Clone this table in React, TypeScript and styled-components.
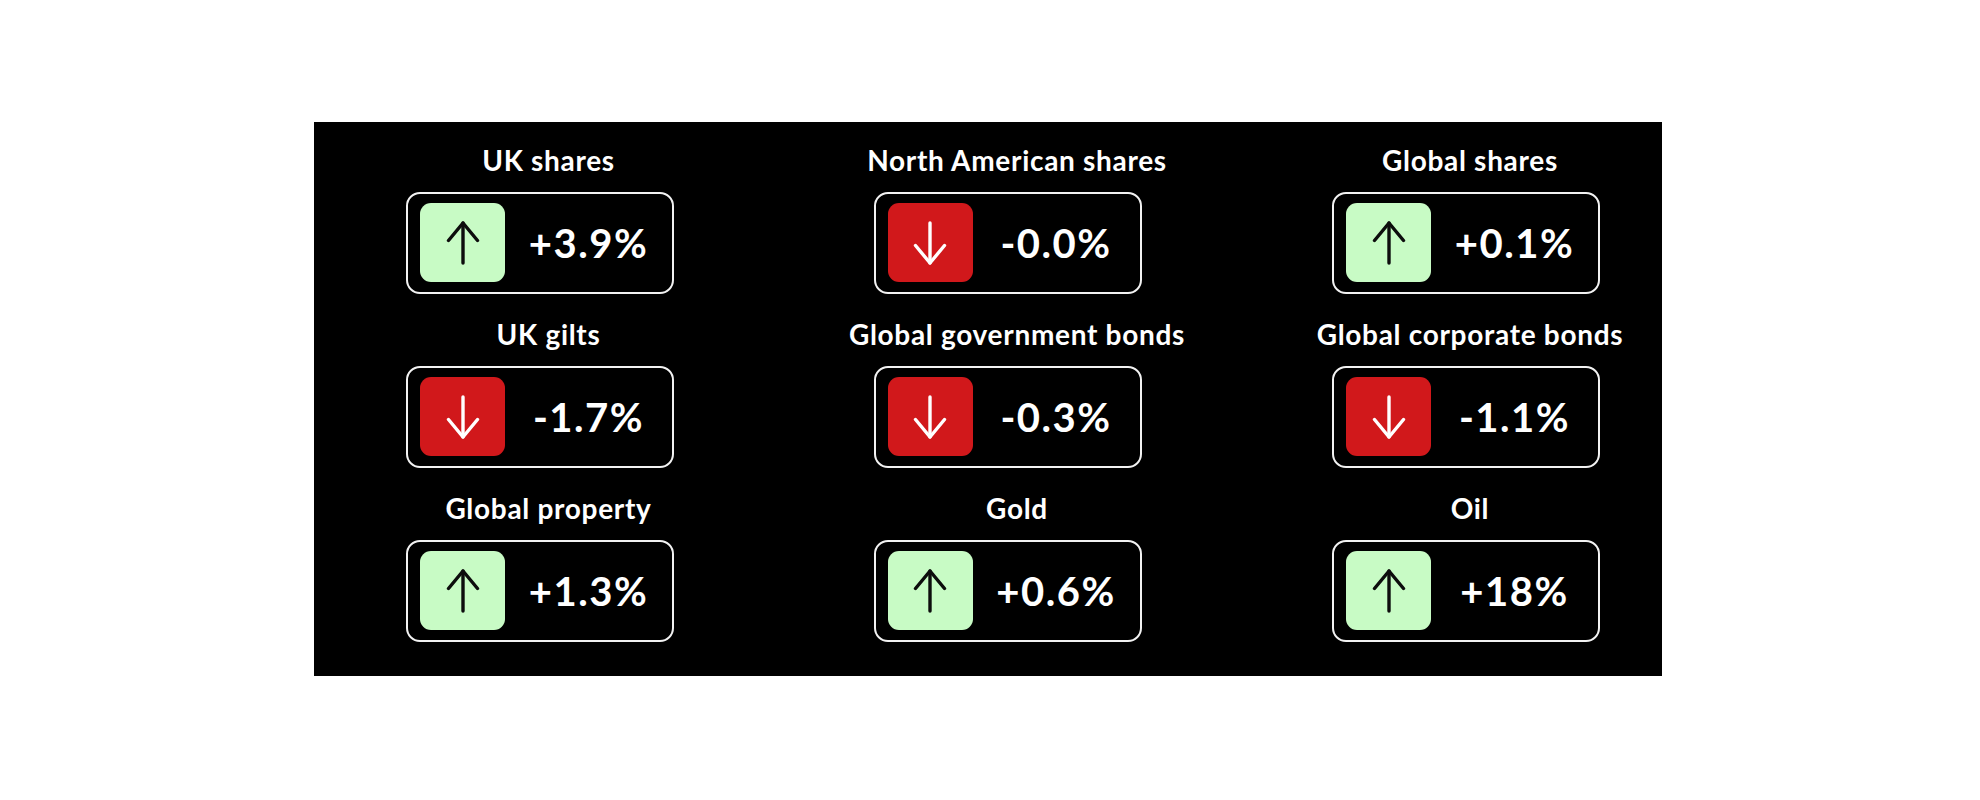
import React from "react";
import styled, { createGlobalStyle } from "styled-components";

const GlobalStyle = createGlobalStyle`
  html, body {
    margin: 0;
    padding: 0;
    background: #ffffff;
  }
  body {
    font-family: Lato, "Open Sans", "Liberation Sans", sans-serif;
  }
`;

const Page = styled.div`
  width: 1980px;
  height: 800px;
  padding: 122px 0 0 314px;
  box-sizing: border-box;
`;

const Panel = styled.section`
  width: 1348px;
  height: 554px;
  box-sizing: border-box;
  background: #000000;
  padding: 22px 0 0 26px;
  display: grid;
  grid-template-columns: 400px 535px 382px;
  grid-auto-rows: auto;
  row-gap: 24px;
  align-content: start;
`;

const Cell = styled.div`
  display: flex;
  flex-direction: column;
  align-items: center;
`;

const Title = styled.h3<{ $shift: number }>`
  margin: 0 0 16px 0;
  padding-left: ${(p) => p.$shift * 2}px;
  font-family: Lato, "Open Sans", "Liberation Sans", sans-serif;
  font-weight: 700;
  font-size: 28px;
  letter-spacing: 0.7px;
  line-height: 32px;
  color: #ffffff;
  white-space: nowrap;
  text-align: center;
`;

const Card = styled.div`
  width: 268px;
  height: 102px;
  box-sizing: border-box;
  border: 2px solid #f2f2f2;
  border-radius: 14px;
  padding: 9px 0 10px 12px;
  display: flex;
  align-items: center;
`;

const Badge = styled.div<{ $up: boolean }>`
  width: 85px;
  height: 79px;
  flex: none;
  border-radius: 11px;
  background: ${(p) => (p.$up ? "#c8fbc5" : "#d1181b")};
  color: ${(p) => (p.$up ? "#0d0d0d" : "#ffffff")};
  display: flex;
  align-items: center;
  justify-content: center;
`;

const Value = styled.span`
  flex: 1;
  text-align: center;
  font-family: Lato, "Open Sans", "Liberation Sans", sans-serif;
  font-weight: 700;
  font-size: 40px;
  letter-spacing: 1.5px;
  line-height: 1;
  color: #ffffff;
  white-space: nowrap;
`;

const Arrow: React.FC<{ up: boolean }> = ({ up }) => (
  <svg
    width="34"
    height="44"
    viewBox="0 0 34 44"
    fill="none"
    stroke="currentColor"
    strokeWidth="3.4"
    strokeLinecap="round"
    strokeLinejoin="round"
    style={{ transform: up ? "none" : "rotate(180deg)" }}
  >
    <line x1="17" y1="2" x2="17" y2="42" />
    <polyline points="2.5,19.5 17,2 31.5,19.5" />
  </svg>
);

type Item = { title: string; value: string; up: boolean };

const items: Item[] = [
  { title: "UK shares", value: "+3.9%", up: true },
  { title: "North American shares", value: "-0.0%", up: false },
  { title: "Global shares", value: "+0.1%", up: true },
  { title: "UK gilts", value: "-1.7%", up: false },
  { title: "Global government bonds", value: "-0.3%", up: false },
  { title: "Global corporate bonds", value: "-1.1%", up: false },
  { title: "Global property", value: "+1.3%", up: true },
  { title: "Gold", value: "+0.6%", up: true },
  { title: "Oil", value: "+18%", up: true },
];

const shifts = [8.5, 9.5, 4];

export default function App() {
  return (
    <>
      <GlobalStyle />
      <Page>
        <Panel>
          {items.map((it, i) => (
            <Cell key={it.title}>
              <Title $shift={shifts[i % 3]}>{it.title}</Title>
              <Card>
                <Badge $up={it.up}>
                  <Arrow up={it.up} />
                </Badge>
                <Value>{it.value}</Value>
              </Card>
            </Cell>
          ))}
        </Panel>
      </Page>
    </>
  );
}
